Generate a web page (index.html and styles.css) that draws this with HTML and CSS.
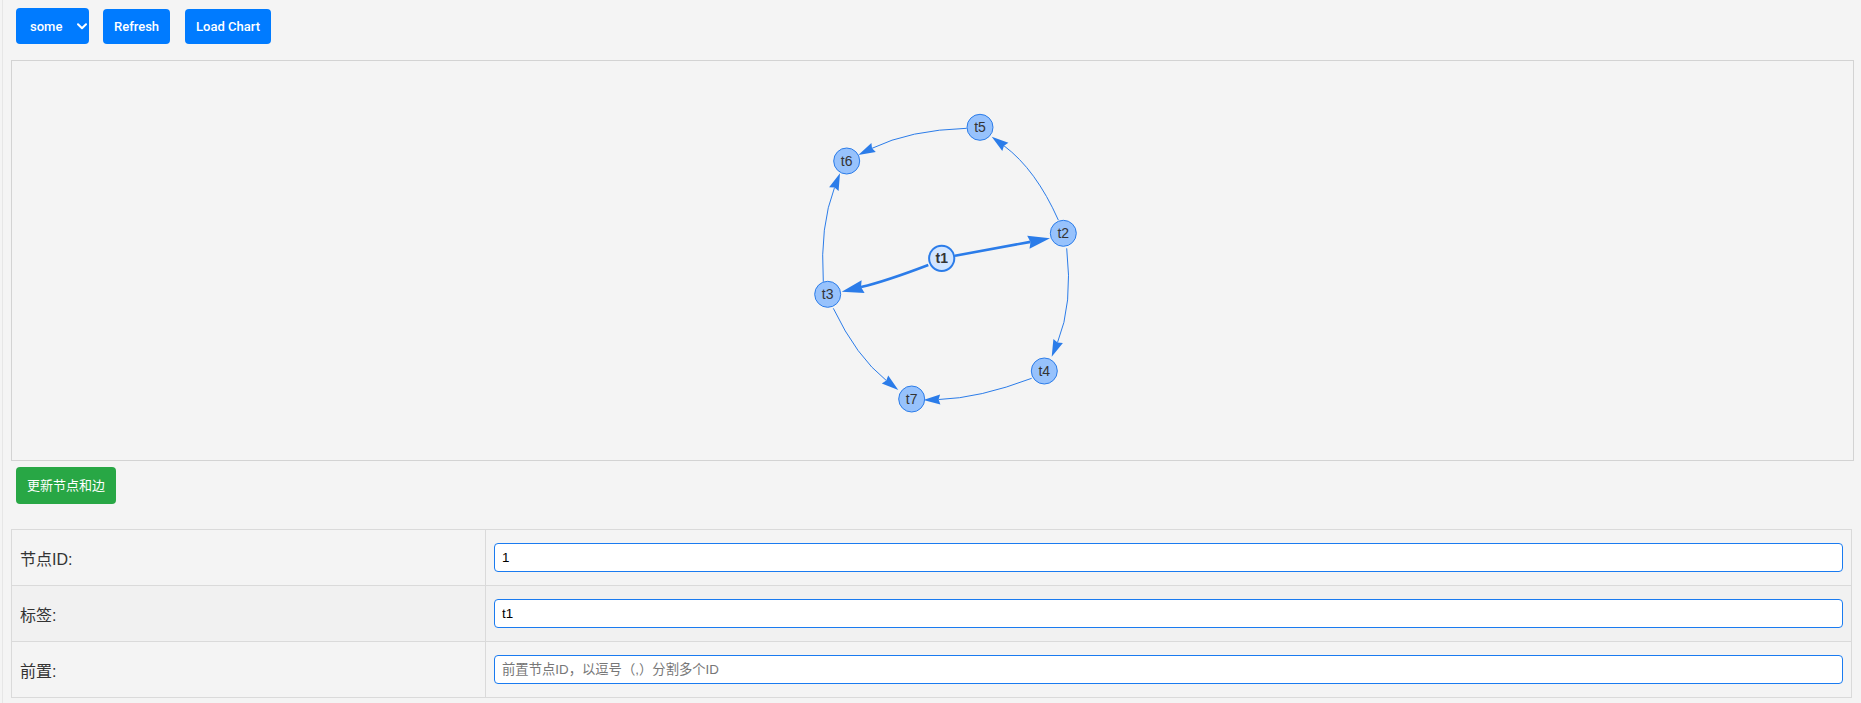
FILE: index.html
```html
<!DOCTYPE html>
<html lang="zh">
<head>
<meta charset="utf-8">
<title>Graph</title>
<link rel="stylesheet" href="styles.css">
</head>
<body>
<div class="page">
  <div class="toolbar">
    <span class="select-wrap">
      <select class="btn select"><option>some</option></select>
      <svg class="chev" width="10" height="7" viewBox="0 0 10 7"><path d="M1 1.2 L5 5.2 L9 1.2" fill="none" stroke="#fff" stroke-width="2" stroke-linecap="round" stroke-linejoin="round"/></svg>
    </span>
    <button class="btn">Refresh</button>
    <button class="btn">Load Chart</button>
  </div>

  <div class="graph">
    <svg class="net" width="1841" height="399" viewBox="12 61 1841 399">
      <g fill="none" stroke="#2b7ce9">
        <path stroke-width="2.6" d="M955 255.7 Q1002.5 247 1030.5 241.9"/>
        <path stroke-width="2.6" d="M928.3 265 Q885.9 281.2 861 287.1"/>
        <path stroke-width="1" d="M1058.3 220 Q1035.9 169.6 1004 145.8"/>
        <path stroke-width="1" d="M966.7 128.3 Q909.6 130 872 148.3"/>
        <path stroke-width="1" d="M823.3 281.7 Q819.8 225.7 834.5 187.6"/>
        <path stroke-width="1" d="M1066.7 248.3 Q1073.1 304.4 1057.5 342.5"/>
        <path stroke-width="1" d="M1031.7 378.3 Q979.3 398.2 938.6 399.5"/>
        <path stroke-width="1" d="M833.3 308.3 Q856.4 356.7 886.3 380.5"/>
      </g>
      <g fill="#2b7ce9">
        <polygon points="1050,238.3 1029.5,248.8 1030.5,241.9 1027.2,235.8"/>
        <polygon points="841.7,291.7 861.6,280.2 861,287.1 864.6,293"/>
        <polygon points="991.7,136.7 1008.4,142.8 1004,145.8 1002.3,150.9"/>
        <polygon points="858.3,155 871.4,143 872,148.3 875.8,152.1"/>
        <polygon points="840,173.3 838.6,191 834.5,187.6 829.1,187.3"/>
        <polygon points="1051.7,356.7 1053.4,339 1057.5,342.5 1062.9,342.9"/>
        <polygon points="923.3,400 940.1,394.4 938.6,399.5 940.4,404.6"/>
        <polygon points="898.3,390 881.8,383.4 886.3,380.5 888.2,375.4"/>
      </g>
      <g class="nodes">
        <circle cx="1063.3" cy="233.3" r="13" fill="#97c2fc" stroke="#2b7ce9" stroke-width="1"/>
        <circle cx="827.7" cy="294.3" r="13" fill="#97c2fc" stroke="#2b7ce9" stroke-width="1"/>
        <circle cx="1044.3" cy="371" r="13" fill="#97c2fc" stroke="#2b7ce9" stroke-width="1"/>
        <circle cx="980" cy="127.3" r="13" fill="#97c2fc" stroke="#2b7ce9" stroke-width="1"/>
        <circle cx="846.7" cy="161" r="13" fill="#97c2fc" stroke="#2b7ce9" stroke-width="1"/>
        <circle cx="911.7" cy="399" r="13" fill="#97c2fc" stroke="#2b7ce9" stroke-width="1"/>
        <circle cx="941.7" cy="258.3" r="12.6" fill="#d2e5ff" stroke="#2b7ce9" stroke-width="2"/>
      </g>
      <g class="labels">
        <text x="1063.3" y="233.3">t2</text>
        <text x="827.7" y="294.3">t3</text>
        <text x="1044.3" y="371">t4</text>
        <text x="980" y="127.3">t5</text>
        <text x="846.7" y="161">t6</text>
        <text x="911.7" y="399">t7</text>
        <text class="sel" x="941.7" y="258.3">t1</text>
      </g>
    </svg>
  </div>

  <div class="actions">
    <button class="btn btn-green">更新节点和边</button>
  </div>

  <table class="form">
    <colgroup><col class="c1"><col></colgroup>
    <tr>
      <th>节点ID:</th>
      <td><input class="field" type="text" value="1"></td>
    </tr>
    <tr class="alt">
      <th>标签:</th>
      <td><input class="field" type="text" value="t1"></td>
    </tr>
    <tr>
      <th>前置:</th>
      <td><input class="field" type="text" placeholder="前置节点ID，以逗号（,）分割多个ID"></td>
    </tr>
  </table>
</div>
</body>
</html>
```

FILE: styles.css
```css
html, body {
  margin: 0;
  padding: 0;
}
body {
  background: #f4f4f4;
  font-family: "Liberation Sans", Arial, "Noto Sans CJK SC", sans-serif;
  color: #333;
}
.page {
  margin-left: 2px;
  border-left: 1px solid #e6e6e6;
  padding: 8px 7px 0 8px;
  min-height: 703px;
  box-sizing: border-box;
}
.toolbar {
  display: flex;
  align-items: flex-start;
  gap: 14px;
  padding-left: 5px;
  height: 36px;
}
.btn {
  font-family: Roboto, "Liberation Sans", "Noto Sans CJK SC", sans-serif;
  font-size: 13px;
  font-weight: 500;
  line-height: 15px;
  color: #fff;
  background: #007bff;
  border: none;
  border-radius: 4px;
  padding: 10px 11px;
  margin: 1px 0 0 0;
  height: 35px;
  cursor: pointer;
}
.toolbar .btn + .btn {
  margin-left: 1px;
}
.select-wrap {
  position: relative;
  display: inline-block;
}
.select {
  appearance: none;
  -webkit-appearance: none;
  width: 73px;
  height: 36px;
  margin: 0;
  padding: 0 0 0 14px;
  text-align: left;
  outline: none;
}
.chev {
  position: absolute;
  left: 61px;
  top: 15px;
  pointer-events: none;
}
.graph {
  margin-top: 16px;
  height: 399px;
  border: 1px solid #d3d3d3;
  overflow: hidden;
}
.net {
  display: block;
}
.labels text {
  font-family: "Liberation Sans", Arial, sans-serif;
  font-size: 14px;
  fill: #343434;
  text-anchor: middle;
  dominant-baseline: central;
}
.labels text.sel {
  font-weight: bold;
}
.actions {
  padding: 6px 0 0 5px;
}
.btn-green {
  background: #28a745;
  font-family: "Liberation Sans", "Noto Sans CJK SC", sans-serif;
  font-weight: 400;
  height: 37px;
  padding: 0 11px;
  margin: 0;
  width: 100px;
}
.form {
  margin-top: 25px;
  width: calc(100% - 2px);
  border-collapse: collapse;
  table-layout: fixed;
}
.form col.c1 {
  width: 474px;
}
.form th, .form td {
  border: 1px solid #dadada;
  height: 56px;
  padding: 0 8px;
  box-sizing: border-box;
}
.form th {
  text-align: left;
  font-weight: 400;
  font-size: 16px;
  color: #333;
  padding-left: 8px;
  font-family: "Liberation Sans", Arial, "Noto Sans CJK SC", sans-serif;
}
.form tr.alt th, .form tr.alt td {
  background: #f1f1f1;
}
.field {
  display: block;
  width: 100%;
  height: 29px;
  box-sizing: border-box;
  border: 1px solid #1a7bf0;
  border-radius: 4px;
  background: #fff;
  padding: 0 7px;
  font-family: "Liberation Sans", Arial, "Noto Sans CJK SC", sans-serif;
  font-size: 13.333px;
  color: #000;
  outline: none;
}
.field::placeholder {
  color: #777;
}
```
